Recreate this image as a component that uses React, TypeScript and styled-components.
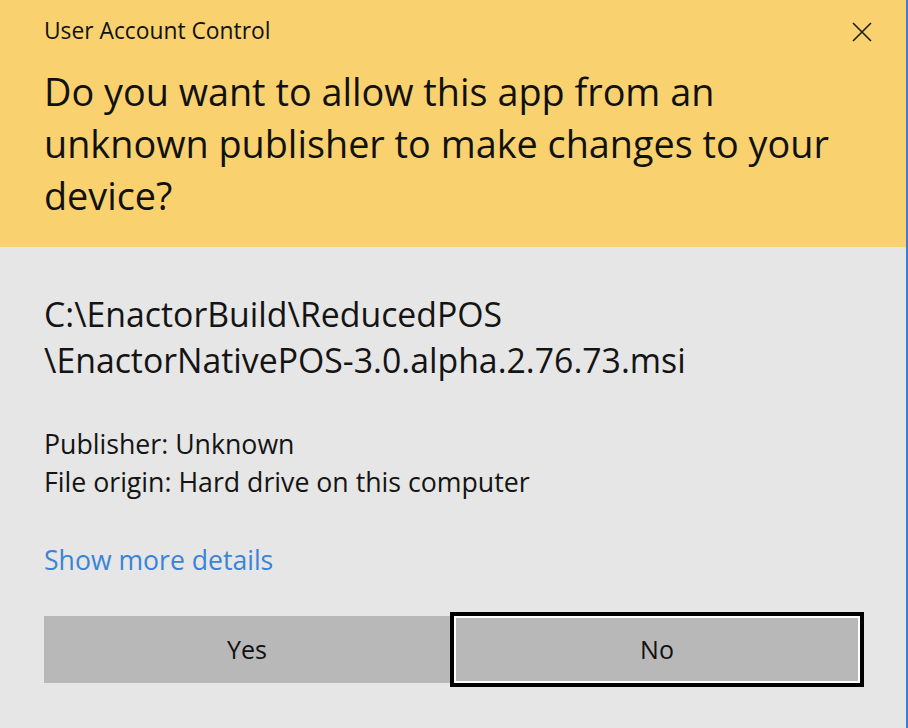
import React from 'react'
import styled, { createGlobalStyle } from 'styled-components'

const GlobalStyle = createGlobalStyle`
  html, body {
    margin: 0;
    padding: 0;
    background: #e6e6e6;
  }
  body {
    font-family: 'Open Sans', 'Noto Sans', sans-serif;
  }
`

const Dialog = styled.div`
  width: 908px;
  height: 728px;
  box-sizing: border-box;
  display: flex;
  flex-direction: column;
  background: #e6e6e6;
  border-right: 2px solid #3a7dd6;
  color: #000;
`

const Header = styled.div`
  height: 247px;
  box-sizing: border-box;
  background: #f9d26f;
  padding: 19px 0 0 44px;
`

const TitleBar = styled.div`
  display: flex;
  align-items: center;
  justify-content: space-between;
  height: 24px;
  padding-right: 34px;
`

const Title = styled.span`
  font-size: 22.8px;
  line-height: 24px;
  color: #111;
`

const CloseButton = styled.button`
  width: 20px;
  height: 20px;
  padding: 0;
  border: none;
  background: transparent;
  display: flex;
  align-items: center;
  justify-content: center;
  cursor: pointer;
  margin-top: 2px;
`

const Heading = styled.h1`
  margin: 23px 0 0;
  font-size: 37.8px;
  font-weight: 400;
  line-height: 52px;
  color: #111;
  white-space: nowrap;
`

const Body = styled.div`
  flex: 1;
  padding: 44px 0 0 44px;
`

const FilePath = styled.div`
  font-size: 33.8px;
  line-height: 46px;
  color: #141414;
  white-space: nowrap;
`

const Details = styled.div`
  margin-top: 42px;
  font-size: 26.7px;
  line-height: 38px;
  color: #141414;
`

const MoreLink = styled.a`
  display: block;
  margin-top: 40px;
  font-size: 26.6px;
  line-height: 38px;
  color: #3a84d8;
  text-decoration: none;
  cursor: pointer;
`

const Buttons = styled.div`
  display: grid;
  grid-template-columns: 406px 406px;
  gap: 4px;
  margin-top: 37px;
`

const DialogButton = styled.button<{ focused?: boolean }>`
  height: 67px;
  box-sizing: border-box;
  background: #b8b8b8;
  border: 2px solid ${(props) => (props.focused ? '#ffffff' : '#b8b8b8')};
  outline: ${(props) => (props.focused ? '4px solid #000' : 'none')};
  font-family: inherit;
  font-size: 25px;
  color: #111;
  padding: 0 0 2px;
  cursor: pointer;
`

const CloseIcon = () => (
  <svg width="20" height="20" viewBox="0 0 20 20">
    <path d="M1 1L19 19M19 1L1 19" stroke="#1b1b1b" strokeWidth="1.6" fill="none" />
  </svg>
)

const App: React.FC = () => {
  return (
    <>
      <GlobalStyle />
      <Dialog>
        <Header>
          <TitleBar>
            <Title>User Account Control</Title>
            <CloseButton aria-label="Close">
              <CloseIcon />
            </CloseButton>
          </TitleBar>
          <Heading>
            Do you want to allow this app from an
            <br />
            unknown publisher to make changes to your
            <br />
            device?
          </Heading>
        </Header>
        <Body>
          <FilePath>
            C:\EnactorBuild\ReducedPOS
            <br />
            \EnactorNativePOS-3.0.alpha.2.76.73.msi
          </FilePath>
          <Details>
            Publisher: Unknown
            <br />
            File origin: Hard drive on this computer
          </Details>
          <MoreLink>Show more details</MoreLink>
          <Buttons>
            <DialogButton>Yes</DialogButton>
            <DialogButton focused>No</DialogButton>
          </Buttons>
        </Body>
      </Dialog>
    </>
  )
}

export default App
